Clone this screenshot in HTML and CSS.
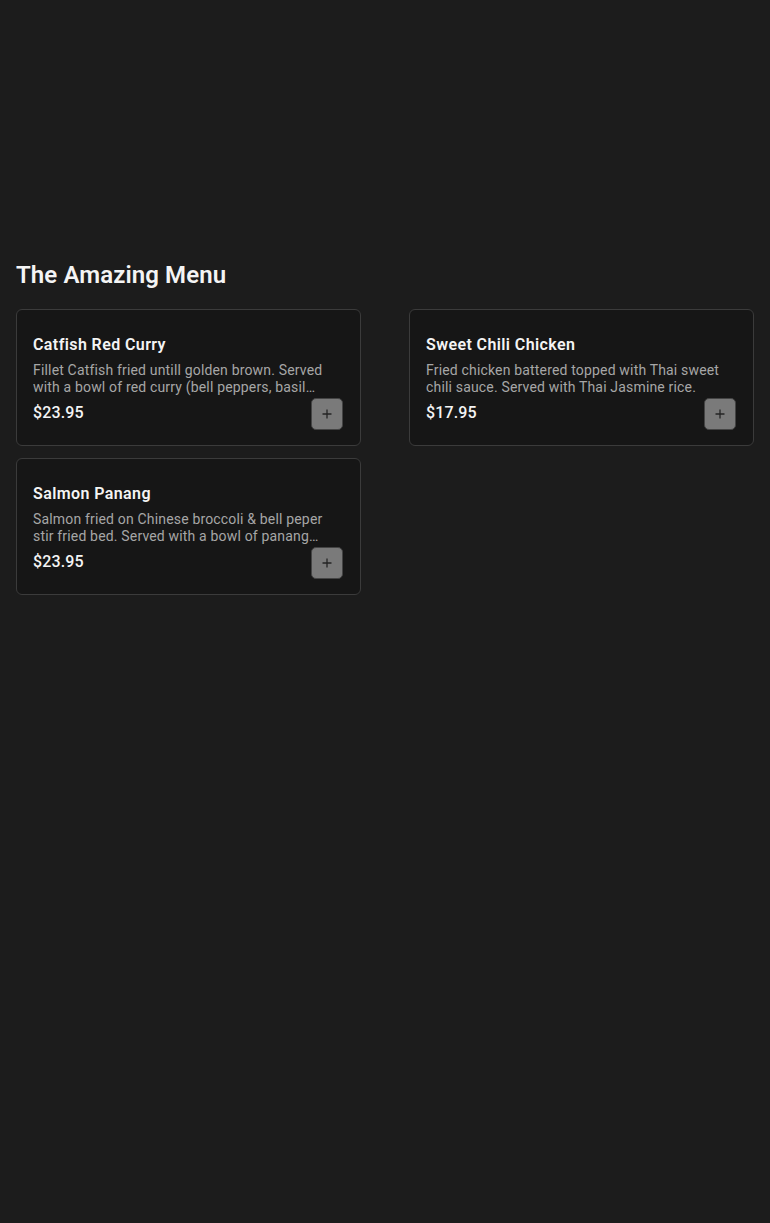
FILE: index.html
```html
<!DOCTYPE html>
<html lang="en">
<head>
<meta charset="utf-8">
<title>The Amazing Menu</title>
<link rel="stylesheet" href="styles.css">
</head>
<body>
<div class="hero"></div>
<main class="menu">
  <h1 class="menu-title">The Amazing Menu</h1>
  <div class="grid">
    <div class="card">
      <h2 class="card-title">Catfish Red Curry</h2>
      <p class="card-desc">Fillet Catfish fried untill golden brown. Served with a bowl of red curry (bell peppers, basil leaves, bamboo shoots) and Thai Jasmine rice.</p>
      <div class="card-foot">
        <span class="price">$23.95</span>
        <button class="add" aria-label="Add"><svg width="10" height="10" viewBox="0 0 10 10"><path d="M5 0.5v9M0.5 5h9" stroke="#252525" stroke-width="1.3"/></svg></button>
      </div>
    </div>
    <div class="card">
      <h2 class="card-title">Sweet Chili Chicken</h2>
      <p class="card-desc">Fried chicken battered topped with Thai sweet chili sauce. Served with Thai Jasmine rice.</p>
      <div class="card-foot">
        <span class="price">$17.95</span>
        <button class="add" aria-label="Add"><svg width="10" height="10" viewBox="0 0 10 10"><path d="M5 0.5v9M0.5 5h9" stroke="#252525" stroke-width="1.3"/></svg></button>
      </div>
    </div>
    <div class="card">
      <h2 class="card-title">Salmon Panang</h2>
      <p class="card-desc">Salmon fried on Chinese broccoli &amp; bell peper stir fried bed. Served with a bowl of panang curry and Thai Jasmine rice.</p>
      <div class="card-foot">
        <span class="price">$23.95</span>
        <button class="add" aria-label="Add"><svg width="10" height="10" viewBox="0 0 10 10"><path d="M5 0.5v9M0.5 5h9" stroke="#252525" stroke-width="1.3"/></svg></button>
      </div>
    </div>
  </div>
</main>
</body>
</html>
```

FILE: styles.css
```css
html, body {
  margin: 0;
  padding: 0;
  background: #1c1c1c;
  color: #f2f2f2;
  font-family: Roboto, "Liberation Sans", sans-serif;
}
.hero {
  height: 260px;
}
.menu {
  padding: 0 16px;
}
.menu-title {
  margin: 0 0 19px;
  font-size: 24px;
  line-height: 30px;
  font-weight: 600;
  letter-spacing: 0.1px;
  color: #f4f4f4;
}
.grid {
  display: grid;
  grid-template-columns: 345px 345px;
  column-gap: 48px;
  row-gap: 12px;
}
.card {
  background: #161616;
  border: 1px solid #3b3b3b;
  border-radius: 6px;
  padding: 23px 16px 15px;
  display: flex;
  flex-direction: column;
}
.card-title {
  margin: 0;
  font-size: 16px;
  line-height: 24px;
  font-weight: 600;
  color: #f4f4f4;
  letter-spacing: 0.4px;
}
.card-desc {
  margin: 5px 0 0;
  font-size: 14px;
  line-height: 17px;
  font-weight: 400;
  letter-spacing: 0.17px;
  color: #a6a6a6;
  display: -webkit-box;
  -webkit-line-clamp: 2;
  -webkit-box-orient: vertical;
  overflow: hidden;
}
.card-foot {
  margin-top: 2px;
  display: flex;
  justify-content: space-between;
  align-items: center;
}
.price {
  font-size: 16px;
  font-weight: 500;
  letter-spacing: 0.15px;
  color: #f4f4f4;
  margin-bottom: 3px;
}
.add {
  width: 32px;
  height: 32px;
  margin-right: 1px;
  border: 1px solid #444;
  border-radius: 5px;
  background: #7a7a7a;
  display: flex;
  align-items: center;
  justify-content: center;
  padding: 0;
}
```
